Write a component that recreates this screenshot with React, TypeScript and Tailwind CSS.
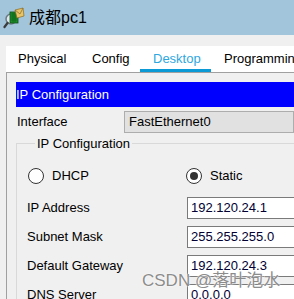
import React from "react";

const rows = [
  { label: "IP Address", value: "192.120.24.1" },
  { label: "Subnet Mask", value: "255.255.255.0" },
  { label: "Default Gateway", value: "192.120.24.3" },
  { label: "DNS Server", value: "0.0.0.0" },
];

const PcIcon = () => (
  <svg width="22" height="24" viewBox="0 0 22 24">
    <circle cx="8" cy="13" r="5" fill="#dfe8ef" stroke="#6b7a86" strokeWidth="1.5" />
    <line x1="4.5" y1="17" x2="1.5" y2="21" stroke="#3c3c3c" strokeWidth="2.2" strokeLinecap="round" />
    <rect x="7" y="6" width="8" height="11" fill="#1f8f2c" stroke="#0c4d14" strokeWidth="0.8" />
    <path d="M8 8h6M8 10h6M8 12h6M8 14h6M10 7v9M12 7v9" stroke="#0b5a15" strokeWidth="0.6" />
    <path d="M12 4l8-2 1 8-7 2z" fill="#e8c46a" stroke="#8a6a20" strokeWidth="0.7" />
    <path d="M12 4l5 4 3-6" fill="none" stroke="#8a6a20" strokeWidth="0.7" />
  </svg>
);

const Radio = ({ checked }: { checked?: boolean }) => (
  <span className="w-[16px] h-[16px] rounded-full border-[1.5px] border-[#333333] bg-white flex items-center justify-center">
    {checked && <span className="w-[8px] h-[8px] rounded-full bg-[#333333]" />}
  </span>
);

export default function App() {
  return (
    <div
      className="relative w-[294px] h-[299px] overflow-hidden bg-[#f0f0f0] text-[13px] text-black"
      style={{ fontFamily: '"Liberation Sans", Arial, "Noto Sans CJK SC", sans-serif' }}
    >
      <div className="h-[35px] bg-[#a3c5dc] flex items-center pl-[3px] gap-[3px]">
        <PcIcon />
        <span className="text-[16px] leading-none ml-[1px]">成都pc1</span>
      </div>

      <div className="pt-[11px] pl-[6px]">
        <div className="h-[26px] bg-white flex items-end">
          <div className="shrink-0 flex items-center h-full pl-[12px] w-[86px]">Physical</div>
          <div className="shrink-0 flex items-center h-full w-[48px]">Config</div>
          <div className="shrink-0 relative flex items-center h-full w-[71px] pl-[13px] text-[#2ea7df]">
            Desktop
            <div className="absolute left-0 right-0 bottom-0 h-[3px] bg-[#0b9ad6]" />
          </div>
          <div className="shrink-0 flex items-center h-full pl-[13px] whitespace-nowrap">Programming</div>
        </div>

        <div className="border-l border-t border-[#a0a0a0] pl-[9px] pt-[9px] h-[300px]">
          <div className="h-[25px] bg-[#0000ff] text-white flex items-center whitespace-nowrap">
            IP Configuration
          </div>

          <div className="flex items-center mt-[4px] h-[22px]">
            <span className="w-[108px] pl-[1px]">Interface</span>
            <div className="flex-1 h-[22px] bg-[#e1e1e1] border border-[#adadad] flex items-center pl-[4px] whitespace-nowrap">
              FastEthernet0
            </div>
          </div>

          <fieldset className="mt-[3px] w-[320px] border-l border-t border-[#d9d9d9] pl-[10px]">
            <legend className="ml-[8px] px-[2px] leading-[15px]">IP Configuration</legend>
            <div className="flex items-center h-[16px] mt-[17px]">
              <div className="flex items-center gap-[8px] w-[159px] pl-[1px]">
                <Radio />
                <span>DHCP</span>
              </div>
              <div className="flex items-center gap-[8px]">
                <Radio checked />
                <span>Static</span>
              </div>
            </div>
            <div className="mt-[13px] flex flex-col gap-[7px]">
              {rows.map((r) => (
                <div key={r.label} className="flex items-center h-[22px]">
                  <span className="w-[160px] whitespace-nowrap">{r.label}</span>
                  <div className="w-[150px] h-[22px] bg-white border border-[#7a7a7a] flex items-center pl-[3px] text-[#000033]">
                    {r.value}
                  </div>
                </div>
              ))}
            </div>
          </fieldset>
        </div>
      </div>

      <div
        className="absolute left-[142px] top-[272px] text-[17px] leading-none text-[#8c8c8c] whitespace-nowrap"
        style={{ textShadow: "0 0 2px #ffffff, 0 0 1px #ffffff" }}
      >
        CSDN @落叶泡水
      </div>
    </div>
  );
}
